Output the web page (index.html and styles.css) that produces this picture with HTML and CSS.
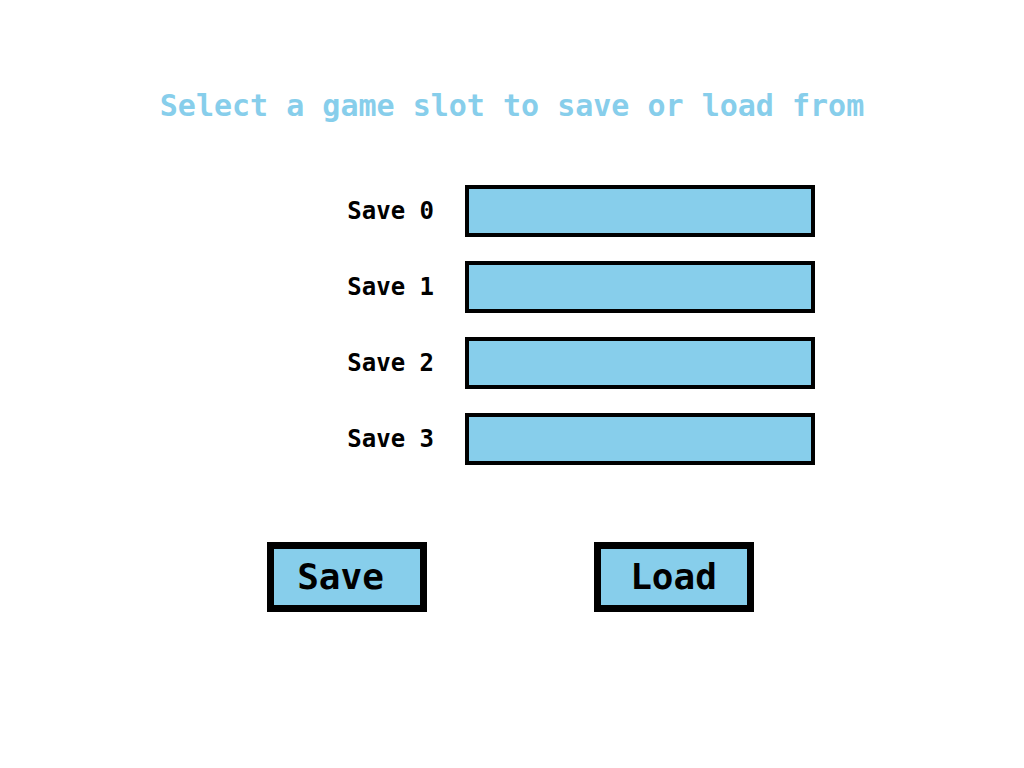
FILE: index.html
```html
<!DOCTYPE html>
<html lang="en">
<head>
<meta charset="utf-8">
<meta name="viewport" content="width=device-width, initial-scale=1">
<title>Save or load</title>
<link rel="stylesheet" href="styles.css">
</head>
<body>
<main class="screen">
<h1 class="title">Select a game slot to save or load from</h1>
<form class="form">
<div class="slots">
<label class="slot-label" for="slot0">Save 0</label><input class="slot" id="slot0" type="text">
<label class="slot-label" for="slot1">Save 1</label><input class="slot" id="slot1" type="text">
<label class="slot-label" for="slot2">Save 2</label><input class="slot" id="slot2" type="text">
<label class="slot-label" for="slot3">Save 3</label><input class="slot" id="slot3" type="text">
</div>
<div class="actions">
<button class="action action-save" type="button">Save</button>
<button class="action" type="button">Load</button>
</div>
</form>
</main>
</body>
</html>
```
FILE: styles.css
```css
* {
  box-sizing: border-box;
}

body {
  margin: 0;
  background: #fff;
  color: #000;
  font-family: "DejaVu Sans Mono", monospace;
  font-weight: bold;
}

.screen {
  padding: 84px 0 40px;
}

.title {
  margin: 0;
  color: #87ceeb;
  font-size: 30px;
  line-height: 44px;
  text-align: center;
}

.slots {
  display: grid;
  grid-template-columns: 434fr 350fr 178fr;
  column-gap: 31px;
  row-gap: 24px;
  align-items: center;
  margin-top: 57px;
}

.slot-label {
  grid-column: 1;
  font-size: 24px;
  line-height: 32px;
  text-align: right;
}

.slot {
  grid-column: 2;
  width: 100%;
  min-width: 0;
  height: 52px;
  padding: 0 12px;
  border: 4px solid #000;
  border-radius: 0;
  background: #87ceeb;
  font: inherit;
  font-size: 24px;
}

.actions {
  display: grid;
  grid-template-columns: 1fr 1fr;
  justify-items: center;
  max-width: 658px;
  margin: 77px auto 0;
  padding-right: 4px;
}

.action {
  width: 160px;
  height: 70px;
  padding: 0;
  border: 7px solid #000;
  border-radius: 0;
  background: #87ceeb;
  color: #000;
  font: inherit;
  font-size: 36px;
  line-height: 48px;
}

.action-save {
  padding-right: 12px;
}
```
